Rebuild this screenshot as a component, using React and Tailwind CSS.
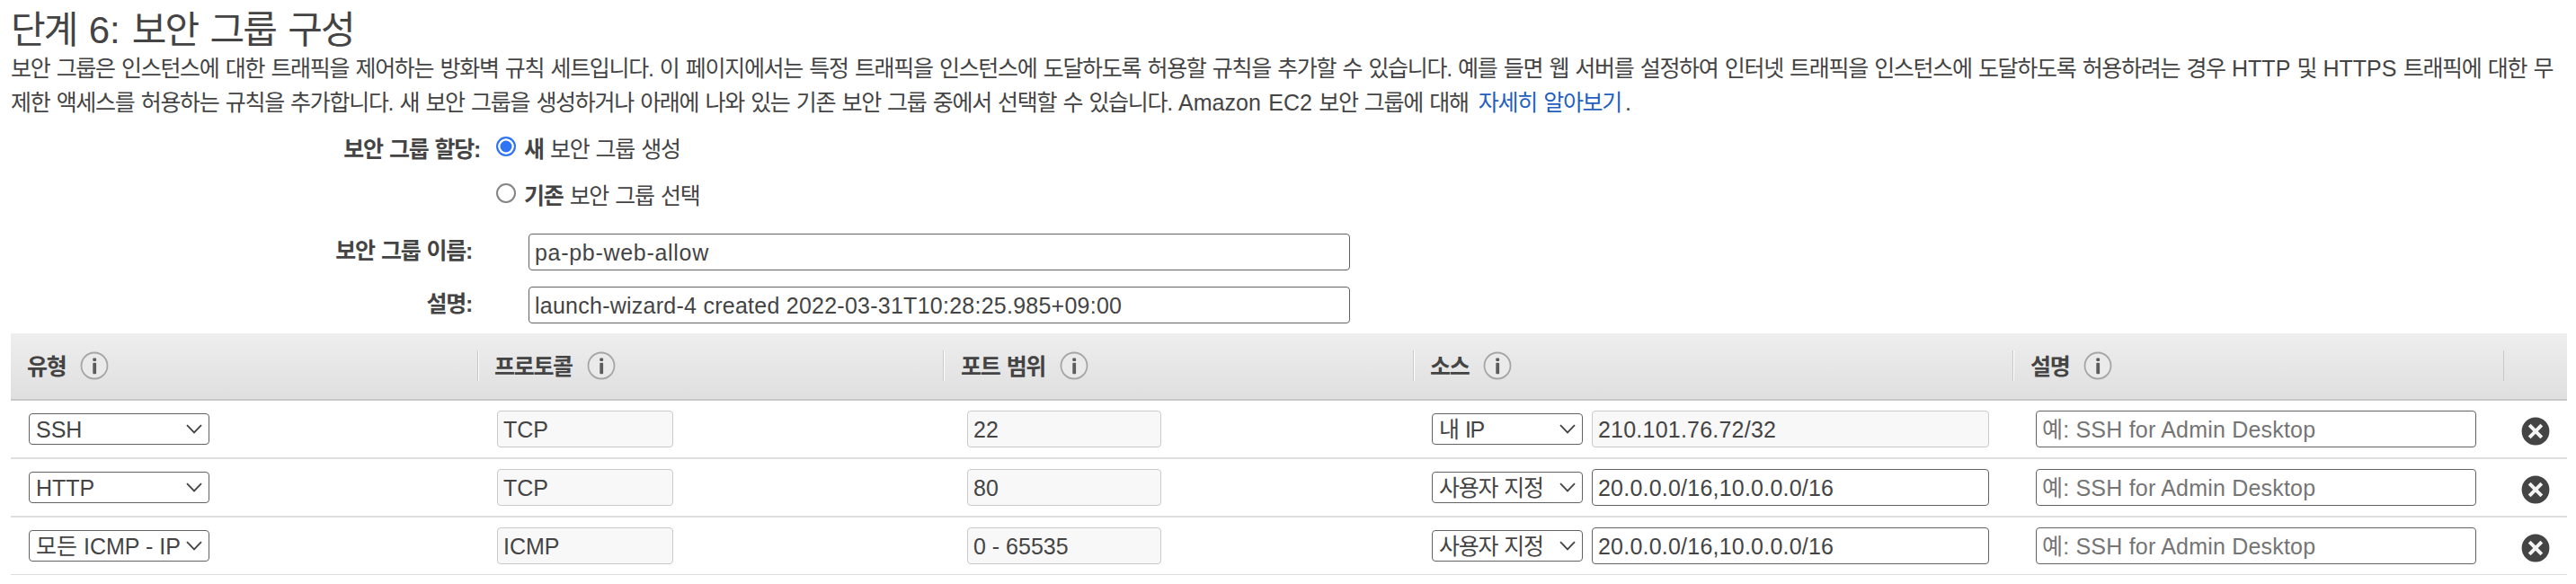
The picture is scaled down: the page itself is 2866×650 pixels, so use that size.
import React, { useState } from "react";

const rules = [
  { type: "SSH", protocol: "TCP", port: "22", source: "내 IP", cidr: "210.101.76.72/32", locked: true },
  { type: "HTTP", protocol: "TCP", port: "80", source: "사용자 지정", cidr: "20.0.0.0/16,10.0.0.0/16" },
  { type: "모든 ICMP - IP", protocol: "ICMP", port: "0 - 65535", source: "사용자 지정", cidr: "20.0.0.0/16,10.0.0.0/16" },
];

const columns = "grid grid-cols-[519px_518px_523px_667px_546px_71px]";
// Hangul sits tighter than the latin text, spaces stay at full width
const korean = "tracking-[-1.3px] [word-spacing:1.6px]";
const latin = "tracking-normal";

function InfoIcon() {
  return (
    <svg width="32" height="32" viewBox="0 0 32 32" className="shrink-0">
      <circle cx="16" cy="16" r="14.5" fill="#eaeaea" stroke="#a6a6a6" strokeWidth="1.8" />
      <rect x="14.3" y="7.5" width="3.8" height="3.4" rx="1" fill="#5c5c5c" />
      <rect x="14.3" y="12.8" width="3.8" height="12.4" rx="1" fill="#5c5c5c" />
    </svg>
  );
}

function DeleteIcon() {
  return (
    <svg width="32" height="32" viewBox="0 0 32 32">
      <circle cx="16" cy="16" r="15.4" fill="#444" />
      <path d="M9.2 9.2 22.8 22.8M22.8 9.2 9.2 22.8" stroke="#f4f4f4" strokeWidth="4" />
    </svg>
  );
}

function Select({ value, className }) {
  return (
    <button className={`flex h-[35px] items-center justify-between whitespace-nowrap rounded-[4px] border border-[#626262] bg-white pl-[7px] pr-[7px] ${className}`}>
      <span>{value}</span>
      <svg width="18" height="12" viewBox="0 0 18 12" fill="none" className="-ml-1 shrink-0">
        <path d="M1 1.2 9 9.4 17 1.2" stroke="#444" strokeWidth="1.8" />
      </svg>
    </button>
  );
}

function TextBox({ className, ...props }) {
  return (
    <input
      className={`rounded-[4px] border border-[#626262] bg-white px-1.5 pt-px placeholder:text-[#757575] disabled:border-[#cacaca] disabled:bg-[#f8f8f8] ${className}`}
      {...props}
    />
  );
}

function HeaderCell({ children, className }) {
  return (
    <div className={`flex h-[34px] items-center gap-4 ${className}`}>
      <span className="whitespace-nowrap pt-0.5">{children}</span>
      <InfoIcon />
    </div>
  );
}

export default function App() {
  const [assign, setAssign] = useState("new");

  return (
    <div className="h-[650px] w-[2866px] overflow-hidden bg-white pl-3 font-['Liberation_Sans','Noto_Sans_CJK_KR',sans-serif] text-[25px] leading-8 text-[#444]">
      <h1 className="h-[57px] pt-[7px] text-[42px] leading-[54px] tracking-[-1.9px] [word-spacing:3.4px]">
        단계 <span className={latin}>6:</span> 보안 그룹 구성
      </h1>
      <div className={`h-[76px] whitespace-nowrap leading-[38px] ${korean}`}>
        <p>
          보안 그룹은 인스턴스에 대한 트래픽을 제어하는 방화벽 규칙 세트입니다. 이 페이지에서는 특정 트래픽을 인스턴스에 도달하도록 허용할 규칙을 추가할 수 있습니다. 예를 들면 웹 서버를 설정하여 인터넷 트래픽을 인스턴스에 도달하도록 허용하려는 경우 <span className={latin}>HTTP</span> 및 <span className={latin}>HTTPS</span> 트래픽에 대한 무
        </p>
        <p>
          제한 액세스를 허용하는 규칙을 추가합니다. 새 보안 그룹을 생성하거나 아래에 나와 있는 기존 보안 그룹 중에서 선택할 수 있습니다. <span className={latin}>Amazon EC2</span> 보안 그룹에 대해 <a href="#" className="ml-1 mr-1 text-[#1f5fc0]">자세히 알아보기</a>.
        </p>
      </div>

      <div className={`flex h-[119px] gap-[18px] pt-[13px] leading-9 ${korean}`}>
        <div className="w-[522px] pt-0.5 text-right font-bold">보안 그룹 할당:</div>
        <div className="flex flex-col gap-4">
          {[
            ["new", "새", "보안 그룹 생성"],
            ["existing", "기존", "보안 그룹 선택"],
          ].map(([id, bold, label]) => (
            <label key={id} className="flex h-9 gap-[9px]">
              <input
                type="radio"
                name="assign"
                checked={assign === id}
                onChange={() => setAssign(id)}
                className="mt-[6px] h-[22px] w-[22px] appearance-none rounded-full border-2 border-[#858585] checked:border-[#2f74f5] checked:bg-[#2f74f5] checked:shadow-[inset_0_0_0_2.5px_white]"
              />
              <span className="pt-0.5"><b>{bold}</b> {label}</span>
            </label>
          ))}
        </div>
      </div>

      <div className="flex h-[59px] pt-2">
        <label className={`w-[513px] pt-px text-right font-bold leading-9 ${korean}`}>보안 그룹 이름:</label>
        <TextBox className="ml-[63px] h-[41px] w-[914px] tracking-[0.7px]" defaultValue="pa-pb-web-allow" />
      </div>
      <div className="flex h-[60px] pt-2">
        <label className={`w-[513px] pt-px text-right font-bold leading-9 ${korean}`}>설명:</label>
        <TextBox className="ml-[63px] h-[41px] w-[914px] tracking-[0.25px]" defaultValue="launch-wizard-4 created 2022-03-31T10:28:25.985+09:00" />
      </div>

      <div className="w-[2844px]">
        <div className={`${columns} ${korean} h-[75px] items-center border-b-2 border-[#c8c8c8] bg-linear-to-b from-[#eeeeee] to-[#dfdfdf] pb-0.5 font-bold`}>
          <HeaderCell className="pl-[18px]">유형</HeaderCell>
          <HeaderCell className="border-l border-[#c8c8c8] pl-[18px] shadow-[inset_1px_0_0_white]">프로토콜</HeaderCell>
          <HeaderCell className="border-l border-[#c8c8c8] pl-[19px] shadow-[inset_1px_0_0_white]">포트 범위</HeaderCell>
          <HeaderCell className="border-l border-[#c8c8c8] pl-[18px] shadow-[inset_1px_0_0_white]">소스</HeaderCell>
          <HeaderCell className="border-l border-[#c8c8c8] pl-[19px] shadow-[inset_1px_0_0_white]">설명</HeaderCell>
          <div className="h-[34px] border-l border-[#c8c8c8]" />
        </div>
        <div>
          {rules.map((rule, i) => (
            <div key={i} className={`${columns} h-[65px] items-center border-b-2 border-[#dedede] last:h-16 last:border-b`}>
              <div className="pl-5">
                <Select value={rule.type} className="w-[201px]" />
              </div>
              <div className="pl-[22px]">
                <TextBox disabled className="block h-[41px] w-[196px]" defaultValue={rule.protocol} />
              </div>
              <div className="pl-[27px]">
                <TextBox disabled className="block h-[41px] w-[216px]" defaultValue={rule.port} />
              </div>
              <div className="flex items-center gap-2.5 pl-[21px]">
                <Select value={rule.source} className={`w-[168px] ${korean}`} />
                <TextBox disabled={rule.locked} className="h-[41px] w-[442px] tracking-[0.22px]" defaultValue={rule.cidr} />
              </div>
              <div className="pl-[26px]">
                <TextBox className="block h-[41px] w-[490px] tracking-[0.2px]" placeholder="예: SSH for Admin Desktop" />
              </div>
              <button className="pl-5 pt-[5px]">
                <DeleteIcon />
              </button>
            </div>
          ))}
        </div>
      </div>
    </div>
  );
}
